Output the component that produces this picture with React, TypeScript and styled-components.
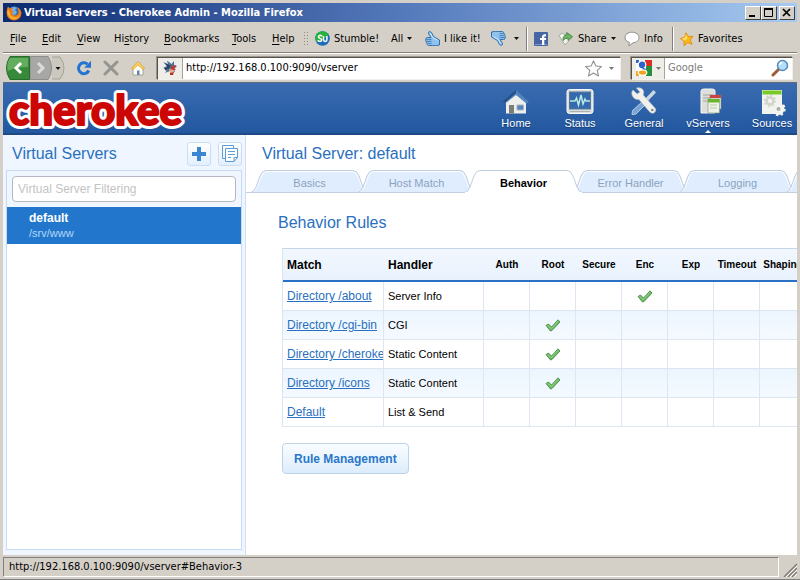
import React from 'react';
import styled, { createGlobalStyle, css } from 'styled-components';

const ui = '"DejaVu Sans Condensed", "Open Sans", "DejaVu Sans", sans-serif';
const page = '"Liberation Sans", Arial, sans-serif';
const face = '#d4d0c8';
const blue = '#2a70c0';

const Global = createGlobalStyle`
  *, *::before, *::after { box-sizing: border-box; }
  body { margin: 0; font-family: ${page}; }
  button { font: inherit; border: 0; padding: 0; background: none; color: inherit; cursor: pointer; }
  svg { display: block; flex: none; }
`;

/* ---------- window chrome ---------- */

const Window = styled.div`
  display: flex;
  flex-direction: column;
  min-height: 100vh;
  padding: 3px 3px 2px;
  background: ${face};
  border-bottom: 1px solid #808080;
  overflow: hidden;
`;

const TitleBar = styled.header`
  display: flex;
  align-items: center;
  height: 19px;
  padding: 0 2px 0 3px;
  gap: 2px;
  background: linear-gradient(90deg, #0c2a70, #5479bb 50%, #a6caf0);
  color: #fff;
  font: bold 11px/19px "DejaVu Sans Condensed", sans-serif;
`;

const Title = styled.h1`
  flex: 1;
  margin: 0;
  font: inherit;
  white-space: nowrap;
  overflow: hidden;
`;

const WindowButtons = styled.div`
  display: flex;
  & > :last-child { margin-left: 2px; }
`;

const WindowButton = styled.button`
  display: grid;
  place-items: center;
  width: 16px;
  height: 14px;
  background: ${face};
  border: 1px solid;
  border-color: #fff #404040 #404040 #fff;
`;

const MenuBar = styled.div`
  display: flex;
  align-items: center;
  height: 31px;
  padding-top: 3px;
  background: ${face};
  border-bottom: 1px solid #848078;
  font: 11px/16px ${ui};
  color: #000;
  white-space: nowrap;
`;

const MenuItem = styled.button<{ $w: number }>`
  width: ${p => p.$w}px;
  padding-left: 7px;
  text-align: left;
  u { text-underline-offset: 2px; }
`;

const Grip = styled.span`
  width: 5px;
  height: 16px;
  margin: 0 7px 0 0;
  background: radial-gradient(circle, #8f8b83 1px, transparent 1px) 0 0 / 3px 3px;
`;

const ToolItem = styled.button<{ $w: number }>`
  display: flex;
  align-items: center;
  gap: 4px;
  flex: none;
  width: ${p => p.$w}px;
`;

const Separator = styled.span`
  width: 2px;
  height: 24px;
  margin-right: 6px;
  border-left: 1px solid #808080;
  border-right: 1px solid #fff;
`;

const NavBar = styled.div`
  display: flex;
  align-items: center;
  height: 30px;
  padding: 0 4px 0 3px;
  border-top: 1px solid #fff;
  border-bottom: 1px solid #5b6a80;
  font: 11px/16px ${ui};
`;

const NavIcons = styled.div`
  display: flex;
  align-items: center;
  gap: 11px;
  width: 151px;
  flex: none;
`;

const Arrows = styled.div`
  display: flex;
  align-items: center;
`;

const Field = styled.div<{ $search?: boolean }>`
  display: flex;
  align-items: center;
  min-width: 0;
  height: 23px;
  background: #fff;
  border: 1px solid;
  border-color: #55514b #f2f0ea #f2f0ea #55514b;
  box-shadow: -1px -1px 0 #9a968e;
  ${p => p.$search ? css`flex: 0 0 162px; margin-left: 10px;` : css`flex: 1;`}
`;

const FieldIcon = styled.button<{ $w: number }>`
  display: flex;
  align-items: center;
  justify-content: center;
  gap: 4px;
  flex: none;
  width: ${p => p.$w}px;
  align-self: stretch;
  background: #efede8;
  border-right: 1px solid #a8a49c;
`;

const FieldInput = styled.input`
  flex: 1;
  width: 0;
  min-width: 0;
  padding: 0 3px;
  border: 0;
  outline: 0;
  background: none;
  font: inherit;
  color: #000;
  &::placeholder { color: #7c7c7c; opacity: 1; }
`;

const FieldButton = styled.button`
  display: flex;
  padding-right: 3px;
`;

const StatusBar = styled.footer`
  display: flex;
  align-items: flex-end;
  height: 22px;
  padding-top: 1px;
  gap: 4px;
  font: 11px/18px ${ui};
`;

const StatusText = styled.div`
  flex: 1;
  height: 20px;
  padding-left: 5px;
  border: 1px solid;
  border-color: #808080 #fff #fff #808080;
`;

/* ---------- page ---------- */

const Page = styled.div`
  flex: 1;
  display: flex;
  flex-direction: column;
  min-height: 0;
  background: #fff;
`;

const Banner = styled.div`
  display: flex;
  justify-content: space-between;
  height: 53px;
  margin-top: -1px;
  background: linear-gradient(#3a6bb0, #2258a0);
  border-top: 1px solid #5b6a80;
  border-bottom: 2px solid #1d4a85;
  overflow: hidden;
`;

const Sections = styled.nav`
  display: flex;
  margin-right: -7px;
`;

const Section = styled.a`
  display: flex;
  flex-direction: column;
  align-items: center;
  width: 64px;
  padding-top: 4px;
  color: #fff;
  text-decoration: none;
  font: 11px/13px ${page};
  text-shadow: 0 1px 1px #143a70;
`;

const Pointer = styled.span`
  border: 3px solid transparent;
  border-top: 0;
  border-bottom-color: #fff;
`;

const Body = styled.div`
  flex: 1;
  display: flex;
`;

const Sidebar = styled.aside`
  display: flex;
  flex-direction: column;
  flex: 0 0 243px;
  padding: 0 3px 5px;
  background: #eff6ff;
  border-right: 1px solid #cfdff3;
`;

const SidebarHead = styled.div`
  display: flex;
  align-items: center;
  gap: 7px;
  height: 35px;
  padding: 2px 0 0 6px;
`;

const Heading = styled.h2`
  flex: 1;
  margin: 0;
  font: 16px/20px ${page};
  color: ${blue};
`;

const SquareButton = styled.button`
  display: grid;
  place-items: center;
  width: 24px;
  height: 24px;
  border: 1px solid #c9ddf3;
  border-radius: 3px;
  background: linear-gradient(#fff, #e2effd);
`;

const ServerBox = styled.div`
  flex: 1;
  border: 1px solid #c6dbf2;
  background: #fff;
`;

const FilterRow = styled.div`
  padding: 5px;
  background: #eff6ff;
`;

const Filter = styled.input`
  display: block;
  width: 100%;
  height: 26px;
  padding: 0 5px;
  border: 1px solid #b4b8c2;
  border-radius: 4px;
  outline: 0;
  background: #fff;
  font: 12px/16px ${page};
  &::placeholder { color: #c4c4c4; opacity: 1; }
`;

const Server = styled.button`
  display: block;
  width: 100%;
  padding: 3px 22px 4px;
  background: #2277cc;
  text-align: left;
  color: #fff;
  font: bold 12px/16px ${page};
  span { display: block; font: 11px/14px ${page}; color: #b4d8fb; }
`;

const Main = styled.main`
  flex: 1;
  min-width: 0;
  overflow: hidden;
`;

const MainHead = styled.div`
  display: flex;
  align-items: center;
  height: 35px;
  padding: 2px 16px 0;
`;

const TabStrip = styled.div`
  display: flex;
  height: 23px;
  padding-left: 10px;
  box-shadow: inset 0 -1px 0 #c3cfe0;
  overflow: hidden;
`;

const TabButton = styled.button<{ $active?: boolean }>`
  position: relative;
  z-index: ${p => (p.$active ? 2 : 1)};
  flex: 0 0 107px;
  height: 23px;
  padding-top: 3px;
  font: ${p => (p.$active ? 'bold ' : '')}11px/20px ${page};
  color: ${p => (p.$active ? '#000' : '#8ba3bd')};
  svg { position: absolute; top: 0; left: -5px; z-index: -1; }
`;

const Panel = styled.section`
  padding: 20px 0 0 36px;
`;

const PanelTitle = styled.h3`
  margin: 0 0 15px -4px;
  font: 16px/20px ${page};
  color: ${blue};
`;

const Rules = styled.table`
  table-layout: fixed;
  width: 524px;
  border-collapse: separate;
  border-spacing: 0;
  border-top: 1px solid #c5d5e8;
  border-left: 1px solid #d8e5f2;
  color: #000;
`;

const HeadCell = styled.th<{ $wide?: boolean }>`
  height: 33px;
  padding: ${p => (p.$wide ? '0 4px' : 0)};
  background: linear-gradient(#f2f7fe, #e9f2fd);
  border-bottom: 2px solid #2a70c4;
  font: bold ${p => (p.$wide ? '12px' : '10px')}/16px ${page};
  text-align: ${p => (p.$wide ? 'left' : 'center')};
  white-space: nowrap;
`;

const Row = styled.tr`
  &:nth-child(even) { background: linear-gradient(#ecf5fe, #f5faff); }
`;

const Cell = styled.td`
  height: 29px;
  padding: 0 4px;
  border-right: 1px solid #dde7f3;
  border-bottom: 1px solid #dbe6f2;
  font: 11px/16px ${page};
  white-space: nowrap;
  overflow: hidden;
`;

const LinkCell = styled(Cell)`
  padding-right: 0;
  font-size: 12px;
  a { color: ${blue}; text-underline-offset: 1px; }
`;

const CheckCell = styled(Cell)`
  padding: 0;
  svg { margin: 0 auto; }
`;

const ActionButton = styled.button`
  height: 31px;
  margin-top: 16px;
  padding: 0 11px;
  border: 1px solid #bfd3e8;
  border-radius: 4px;
  background: linear-gradient(#fafdff, #dcecfc);
  font: bold 12px/16px ${page};
  color: #2a78c8;
`;

/* ---------- drawings ---------- */

const Caret = ({ color = '#111' }: { color?: string }) => (
  <svg width="5" height="3" viewBox="0 0 5 3"><path d="M0 0h5L2.5 3z" fill={color} /></svg>
);

const Firefox = () => (
  <svg width="16" height="16" viewBox="0 0 16 16">
    <circle cx="8" cy="7.500" r="6.200" fill="#3569b4" />
    <path d="M5 3q3-2 6 0L9 5l2 2-2 3-3-1z" fill="#6fb4e8" />
    <path d="M2 1.500 4 3.500q2-1 3 0L5.500 5 8 6.500 6 8q1 3 4 2.500 3-1 2.500-5L11 2q4 2 4.500 6-.5 7-7.500 7.500Q1 15 .5 8 .5 4 2 1.500z" fill="#ee7d18" />
    <path d="M1.500 7q0 5 5 7 6 1 8-5-1 3-5 3.500Q4 12 3.500 7L2 4z" fill="#fbb62b" />
  </svg>
);

const Stumble = () => (
  <svg width="15" height="15" viewBox="0 0 15 15">
    <circle cx="7.500" cy="7.500" r="7.300" fill="#1b6cbc" />
    <path d="M.2 7.500a7.300 7.300 0 0 1 13.500-3.800C10 7 6 11 1.500 11z" fill="#27b33b" />
    <path d="M7 5.300Q6.800 4.200 5.200 4.200 3.400 4.300 3.400 5.700q0 1.100 1.700 1.700Q6.800 8 6.700 9.200 6.500 10.500 5 10.500 3.200 10.500 3.100 9M8.500 5v3.800q.1 1.700 1.700 1.700 1.700 0 1.700-1.700V5" fill="none" stroke="#fff" strokeWidth="1.500" />
  </svg>
);

const Thumb = ({ down }: { down?: boolean }) => (
  <svg width="15" height="15" viewBox="0 0 15 15">
    <g transform={down ? 'matrix(-1 0 0 -1 15 15)' : undefined} stroke="#3472ad" strokeLinejoin="round">
      <path d="M3.500 1.200Q5-.2 6.500 1.500L8.500 5.500 14.500 9v5q-4 1.200-7 .5H3.500Q1.800 14 2.200 12.500.700 12 1.200 10.300 0 9 1 8 .8 6.500 2.500 6.500H6L3.800 3.200z" fill="#8fc3ee" />
      <path d="M1.500 8.400h5M1.700 10.400h4.800M2.500 12.400h4" strokeWidth=".8" />
      <path d="M5 1.800 7.500 6.300l5 3" fill="none" stroke="#d3eafc" />
    </g>
  </svg>
);

const Facebook = () => (
  <svg width="14" height="14" viewBox="0 0 14 14">
    <rect width="14" height="14" rx="1" fill="#4566a3" />
    <path d="M1 12h12v1H1z" fill="#8196c0" />
    <path d="M12 2.200H10.300Q8 2.300 8 4.600V6H6v2h2v5h2.300V8h1.600l.3-2h-1.900V4.900q0-.7.700-.7H12z" fill="#fff" />
  </svg>
);

const Share = () => (
  <svg width="16" height="15" viewBox="0 0 16 15">
    <path d="M1 4.500 4 2l3 2 3-2 4 4.500L7 14z" fill="#f3f3ee" stroke="#a6aaa2" />
    <path d="M5 9.500Q4.500 4.500 9 3.800L8.500 1.500 14.500 5.500 10 9.500V7.200Q7 7 5 9.500z" fill="#6fb466" stroke="#37833b" strokeWidth=".8" />
  </svg>
);

const Bubble = () => (
  <svg width="16" height="16" viewBox="0 0 16 16">
    <path d="M8 1.200c4 0 7 2.200 7 5.300 0 3-2.500 5-6 5.300L5 15l.3-3.600C2.500 10.500 1 8.800 1 6.500c0-3.100 3-5.300 7-5.300z" fill="#fff" stroke="#8c8c8c" />
  </svg>
);

const Star = ({ gold }: { gold?: boolean }) => (
  <svg width={gold ? 14 : 17} height={gold ? 14 : 17} viewBox="0 0 16 16">
    <path
      d="M8 .8 10.200 5.700 15.400 6.200 11.500 9.700 12.700 15 8 12.200 3.300 15 4.500 9.700.6 6.200 5.800 5.700z"
      transform={gold ? 'rotate(-10 8 8)' : undefined}
      fill={gold ? '#fcb813' : '#fff'} stroke={gold ? '#e28e10' : '#8d8d8d'} strokeLinejoin="round"
    />
    {gold && <path d="M7 2.500 8.500 7 5 10 2 7l3.500-.5z" fill="#ffe169" />}
  </svg>
);

const Back = () => (
  <svg width="24" height="24" viewBox="0 0 24 24">
    <path d="M4 .5h19.500v23H4Q.5 18 .5 12T4 .5z" fill="#37893b" stroke="#286c2c" />
    <path d="M4 2h18v9Q10 11 1.500 15 .5 7 4 2z" fill="#65ad5e" />
    <path d="M15 7l-5 5 5 5" fill="none" stroke="#fff" strokeWidth="3" />
  </svg>
);

const Forward = () => (
  <svg width="22" height="24" viewBox="0 0 22 24">
    <path d="M0 .5h18Q21.500 5 21.500 12T18 23.500H0z" fill="#a7a7a5" stroke="#8e8e8a" />
    <path d="M8 7l5 5-5 5" fill="none" stroke="#dcdcda" strokeWidth="3" />
  </svg>
);

const HistoryDrop = () => (
  <svg width="13" height="24" viewBox="0 0 13 24">
    <path d="M0 1h8q4 5 4 11t-4 11H0" fill="#cbc8c0" stroke="#a5a199" />
    <path d="M3.500 11h5l-2.500 3z" fill="#111" />
  </svg>
);

const Reload = () => (
  <svg width="16" height="16" viewBox="0 0 16 16">
    <path d="M12.800 10.500A5.400 5.400 0 1 1 11.500 4.200" fill="none" stroke="#2273d2" strokeWidth="3" />
    <path d="M15 .8v7H8.200z" fill="#2273d2" />
  </svg>
);

const Stop = () => (
  <svg width="16" height="16" viewBox="0 0 16 16">
    <path d="M2 2l12 12M14 2 2 14" stroke="#96948f" strokeWidth="3" strokeLinecap="round" />
  </svg>
);

const HomeSmall = () => (
  <svg width="16" height="16" viewBox="0 0 16 16">
    <path d="M3 8.500 8 4l5 4.500V15H3z" fill="#fdfdf8" stroke="#98958b" strokeWidth=".8" />
    <path d="M8 1.500 14.500 8.300 13 9.500 8 4.800 3 9.500 1.500 8.300z" fill="#ffd75c" stroke="#d79a28" strokeWidth=".8" />
    <path d="M7 10.500h2.500V15H7z" fill="#6483ae" />
  </svg>
);

const Favicon = () => (
  <svg width="16" height="16" viewBox="0 0 16 16">
    <path d="M1 2l5 2L5 .5 9.500 4 12 1v4l3 1-3 3 1 3-5-1-5 2 3-4-5-1 4-2z" fill="#4a7197" />
    <path d="M3 3l6 3-3 2zM2 8l6-1-4 4z" fill="#27425f" />
    <path d="M9 6l5-1-2 3 2 2-5 0z" fill="#c9342b" />
    <path d="M7 9l5 1-1 4-3-1z" fill="#e9ad91" />
    <path d="M8 13l4-1-1 3H8z" fill="#b82f2a" />
  </svg>
);

const GoogleMark = () => (
  <svg width="16" height="16" viewBox="0 0 16 16">
    <path d="M0 0h16v16H0z" fill="#fff" />
    <path d="M9 0h7v6H9z" fill="#dc2f24" />
    <path d="M10 6h6v10h-6z" fill="#27903e" />
    <path d="M0 11h3v5H0z" fill="#f4a321" />
    <path d="M0 0h3v3H0z" fill="#2b62cb" />
    <ellipse cx="6" cy="4.800" rx="3.800" ry="4" fill="#2b62cb" stroke="#fff" strokeWidth="1.200" />
    <path d="M6.500 8.500 9.500 10" stroke="#2b62cb" strokeWidth="2" />
    <ellipse cx="6.500" cy="12.600" rx="4.300" ry="2.800" fill="#f4a321" stroke="#fff" strokeWidth="1.200" />
  </svg>
);

const Magnifier = () => (
  <svg width="18" height="18" viewBox="0 0 18 18">
    <path d="M2 16l6-6" stroke="#9c5d36" strokeWidth="3" strokeLinecap="round" />
    <circle cx="11.500" cy="6.500" r="5" fill="#b5defa" stroke="#5689bd" strokeWidth="1.500" />
    <path d="M8.500 6q.5-2.500 3-2.800" fill="none" stroke="#fff" strokeWidth="1.400" />
  </svg>
);

const ResizeGrip = () => (
  <svg width="14" height="14" viewBox="0 0 14 14">
    <path d="M1 14 14 1M5 14l9-9M9 14l5-5" stroke="#817d76" strokeWidth="1.500" />
    <path d="M3 14 14 3M7 14l7-7M11 14l3-3" stroke="#fff" />
  </svg>
);

const Logo = () => (
  <svg width="190" height="50" viewBox="0 0 190 50" role="img" aria-label="cherokee">
    <g fontFamily="Lato, sans-serif" fontWeight="900" fontSize="42" fill="#cc0505" strokeLinejoin="round">
      <text x="6" y="42" stroke="#fff" strokeWidth="8">cherokee</text>
      <text x="6" y="42" stroke="#cc0505" strokeWidth="2">cherokee</text>
    </g>
  </svg>
);

const sectionArt: Record<string, React.ReactNode> = {
  Home: (
    <>
      <path d="M5 14v12.500h20V14L15 7z" fill="#eeeeea" />
      <path d="M1 15 15 3l13 12-2.500 1.500L15 8 4 16.500z" fill="#5284be" />
      <path d="M1 15 15 3v3L3.500 16z" fill="#234e89" />
      <path d="M8 18h5v8.500H8z" fill="#7c7d79" />
      <path d="M16 18h6.500v5H16z" fill="#5385c0" stroke="#a8b4c0" />
    </>
  ),
  Status: (
    <>
      <rect x="2" y="2.500" width="26" height="24" rx="2.500" fill="#d9dedf" stroke="#f8f8f6" />
      <rect x="4.500" y="5" width="21" height="17" fill="#356bae" stroke="#5e7893" />
      <path d="M5 14h5l1.500-3 2 7L16 8l2 9 2-5 1 2h4" fill="none" stroke="#b9e9e0" strokeWidth="1.500" />
      <path d="M5 24.500h20" stroke="#a9afb0" />
    </>
  ),
  General: (
    <>
      <path d="M24.500 3 27 5.500 16.500 16.500 14 14z" fill="#cbd8e4" />
      <path d="M13 15l3 3-9 9-4 .5.500-4z" fill="#7aa4d3" stroke="#b4ccdf" />
      <path d="M3 8Q2 5 4 3l4 4 3-2-3.500-4Q13 0 14.500 4q.6 2-.3 4L25 20q3 2.500 1 5t-5 .3L10 12.500Q5 13 3 8z" fill="#f0f0ed" stroke="#bcc1c4" strokeWidth=".7" />
      <circle cx="23.300" cy="23" r="1.300" fill="#81888c" />
    </>
  ),
  vServers: (
    <>
      <path d="M8 4q0-2 3-2h8q3 0 3 2v22H8z" fill="#dededa" stroke="#f6f6f3" />
      <path d="M10 8h8M10 11h8M10 14h5" stroke="#a6a6a1" />
      <path d="M17 8h11v14H17z" fill="#edeeed" stroke="#868784" strokeWidth=".6" />
      <path d="M17 8h11v3H17z" fill="#cc4343" />
      <path d="M15 12h11.500v14H15z" fill="#edf3e6" stroke="#7d8f71" strokeWidth=".6" />
      <path d="M15 12h11.500v3.500H15z" fill="#68b62a" />
      <path d="M17 18h7M17 21h7" stroke="#b7c6ae" />
    </>
  ),
  Sources: (
    <>
      <path d="M5 3h20v24H5z" fill="#f1f3ee" />
      <path d="M5.500 3.500h19v4h-19z" fill="#79c927" />
      <circle cx="13" cy="14" r="3.500" fill="none" stroke="#d1d3cb" strokeWidth="2.500" />
      <circle cx="13" cy="14" r="5.400" fill="none" stroke="#d1d3cb" strokeWidth="1.500" strokeDasharray="2 2.200" />
      <circle cx="21.500" cy="22" r="4" fill="none" stroke="#f3f3ef" strokeWidth="4" />
      <circle cx="21.500" cy="22" r="6.200" fill="none" stroke="#f3f3ef" strokeWidth="2" strokeDasharray="2.500 2.300" />
      <circle cx="21.500" cy="22" r="2" fill="#aaafa9" />
    </>
  ),
};

const Plus = () => (
  <svg width="14" height="14" viewBox="0 0 14 14"><path d="M5 0h4v5h5v4H9v5H5V9H0V5h5z" fill="#3a86d0" /></svg>
);

const Copy = () => (
  <svg width="16" height="17" viewBox="0 0 16 17" fill="none" stroke="#5b9bd6">
    <path d="M3 13.500H.5V.5h11V3" />
    <path d="M3.500 3.500h12v9l-3.500 4H3.500z" fill="#fff" />
    <path d="M15.500 12.500H12v4M6 6.500h7M6 9.500h7M6 12.500h3" />
  </svg>
);

const Check = () => (
  <svg width="16" height="13" viewBox="0 0 16 13" role="img" aria-label="Yes">
    <path d="M1 6.500 3.500 5 6.500 8 13 .8 15 3 7 11.500 5.500 12z" fill="#6cbb64" stroke="#3f8440" strokeWidth=".8" strokeLinejoin="round" />
    <path d="M2.500 6.500 6.500 9.500 13 2.200" fill="none" stroke="#9ad78f" strokeWidth=".8" />
  </svg>
);

const TabShape = ({ active }: { active?: boolean }) => (
  <svg width="117" height="23" viewBox="0 0 117 23">
    <path d="M0 22.500Q3 22 5 17L9 6Q11 .5 15 .5h87q4 0 6 5.500l4 11q2 5 5 5.500z" fill={active ? '#fff' : '#e0edfe'} />
    <path d="M1.500 22.500Q4 21 6 17l4-10Q12 1.500 15 1.500h87q3 0 5 5.500l4 10q2 4 4 5.500" fill="none" stroke="#fff" />
    <path d="M0 22.500Q3 22 5 17L9 6Q11 .5 15 .5h87q4 0 6 5.500l4 11q2 5 5 5.500" fill="none" stroke="#becede" />
    <path d="M0 22.500h117" stroke={active ? '#fff' : '#c3cfe0'} />
  </svg>
);

/* ---------- data ---------- */

const menus: [string, string, string, number][] = [
  ['', 'F', 'ile', 32], ['', 'E', 'dit', 35], ['', 'V', 'iew', 37], ['Hi', 's', 'tory', 50],
  ['', 'B', 'ookmarks', 68], ['', 'T', 'ools', 40], ['', 'H', 'elp', 38],
];
const sections = ['Home', 'Status', 'General', 'vServers', 'Sources'];
const tabs = ['Basics', 'Host Match', 'Behavior', 'Error Handler', 'Logging', ''];
const flags = ['Auth', 'Root', 'Secure', 'Enc', 'Exp', 'Timeout', 'Shaping'];
const rules = [
  { match: 'Directory /about', handler: 'Server Info', on: 'Enc' },
  { match: 'Directory /cgi-bin', handler: 'CGI', on: 'Root' },
  { match: 'Directory /cherokee', handler: 'Static Content', on: 'Root' },
  { match: 'Directory /icons', handler: 'Static Content', on: 'Root' },
  { match: 'Default', handler: 'List & Send', on: '' },
];

export default function App() {
  return (
    <Window>
      <Global />
      <TitleBar>
        <Firefox />
        <Title>Virtual Servers - Cherokee Admin - Mozilla Firefox</Title>
        <WindowButtons>
          <WindowButton aria-label="Minimize"><svg width="10" height="9"><path d="M1 8h6" stroke="#000" strokeWidth="2" /></svg></WindowButton>
          <WindowButton aria-label="Maximize"><svg width="10" height="9"><path d="M.5 0v8.500h8V0" fill="none" stroke="#000" /><path d="M0 1h9" stroke="#000" strokeWidth="2" /></svg></WindowButton>
          <WindowButton aria-label="Close"><svg width="10" height="9"><path d="M1 1l7 7M8 1 1 8" stroke="#000" strokeWidth="1.700" /></svg></WindowButton>
        </WindowButtons>
      </TitleBar>
      <MenuBar>
        {menus.map(([a, k, b, w]) => <MenuItem key={k} $w={w}>{a}<u>{k}</u>{b}</MenuItem>)}
        <Grip />
        <ToolItem $w={76}><Stumble />Stumble!</ToolItem>
        <ToolItem $w={34}>All <Caret /></ToolItem>
        <ToolItem $w={66}><Thumb />I like it!</ToolItem>
        <ToolItem $w={35} aria-label="Dislike"><Thumb down /><span /><Caret /></ToolItem>
        <Separator />
        <ToolItem $w={24} aria-label="Facebook"><Facebook /></ToolItem>
        <ToolItem $w={66}><Share />Share<Caret /></ToolItem>
        <ToolItem $w={48}><Bubble />Info</ToolItem>
        <Separator />
        <ToolItem $w={66}><Star gold />Favorites</ToolItem>
      </MenuBar>
      <NavBar>
        <NavIcons>
          <Arrows>
            <button aria-label="Back"><Back /></button>
            <button aria-label="Forward"><Forward /></button>
            <button aria-label="Recent pages"><HistoryDrop /></button>
          </Arrows>
          <button aria-label="Reload"><Reload /></button>
          <button aria-label="Stop"><Stop /></button>
          <button aria-label="Home page"><HomeSmall /></button>
        </NavIcons>
        <Field>
          <FieldIcon $w={25} aria-label="Site identity"><Favicon /></FieldIcon>
          <FieldInput aria-label="Address" defaultValue="http://192.168.0.100:9090/vserver" />
          <FieldButton aria-label="Bookmark this page"><Star /></FieldButton>
          <FieldButton aria-label="Address history"><svg width="12" height="3" viewBox="0 0 12 3"><path d="M4 0h5L6.500 3z" fill="#777" /></svg></FieldButton>
        </Field>
        <Field $search>
          <FieldIcon $w={33} aria-label="Search engine"><GoogleMark /><Caret color="#777" /></FieldIcon>
          <FieldInput aria-label="Search" placeholder="Google" />
          <FieldButton aria-label="Search"><Magnifier /></FieldButton>
        </Field>
      </NavBar>
      <Page>
        <Banner>
          <Logo />
          <Sections>
            {sections.map(name => (
              <Section key={name} href={`#${name}`}>
                <svg width="30" height="30" viewBox="0 0 30 30">{sectionArt[name]}</svg>
                {name}
                {name === 'vServers' && <Pointer />}
              </Section>
            ))}
          </Sections>
        </Banner>
        <Body>
          <Sidebar>
            <SidebarHead>
              <Heading>Virtual Servers</Heading>
              <SquareButton aria-label="Add server"><Plus /></SquareButton>
              <SquareButton aria-label="Clone server"><Copy /></SquareButton>
            </SidebarHead>
            <ServerBox>
              <FilterRow><Filter aria-label="Virtual Server Filtering" placeholder="Virtual Server Filtering" /></FilterRow>
              <Server>default<span>/srv/www</span></Server>
            </ServerBox>
          </Sidebar>
          <Main>
            <MainHead><Heading>Virtual Server: default</Heading></MainHead>
            <TabStrip role="tablist">
              {tabs.map(name => (
                <TabButton key={name} role="tab" aria-selected={name === 'Behavior'} $active={name === 'Behavior'}>
                  <TabShape active={name === 'Behavior'} />{name}
                </TabButton>
              ))}
            </TabStrip>
            <Panel>
              <PanelTitle>Behavior Rules</PanelTitle>
              <Rules>
                <colgroup>
                  <col width="101" /><col width="100" />
                  {flags.map(f => <col key={f} width="46" />)}
                </colgroup>
                <thead>
                  <tr>
                    <HeadCell $wide>Match</HeadCell>
                    <HeadCell $wide>Handler</HeadCell>
                    {flags.map(f => <HeadCell key={f}>{f}</HeadCell>)}
                  </tr>
                </thead>
                <tbody>
                  {rules.map(r => (
                    <Row key={r.match}>
                      <LinkCell><a href="#rule">{r.match}</a></LinkCell>
                      <Cell>{r.handler}</Cell>
                      {flags.map(f => <CheckCell key={f}>{r.on === f && <Check />}</CheckCell>)}
                    </Row>
                  ))}
                </tbody>
              </Rules>
              <ActionButton>Rule Management</ActionButton>
            </Panel>
          </Main>
        </Body>
      </Page>
      <StatusBar>
        <StatusText>http://192.168.0.100:9090/vserver#Behavior-3</StatusText>
        <ResizeGrip />
      </StatusBar>
    </Window>
  );
}
